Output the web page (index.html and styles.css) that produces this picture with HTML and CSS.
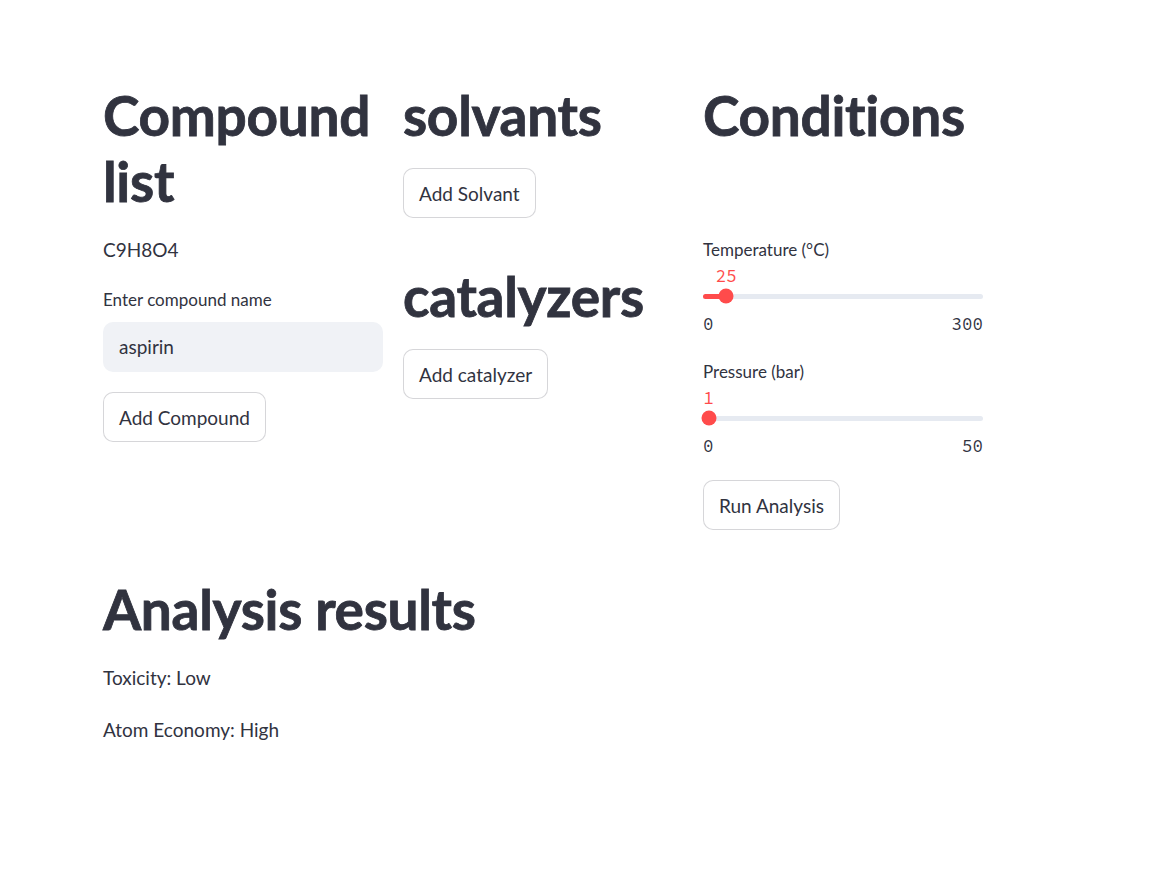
FILE: index.html
```html
<!DOCTYPE html>
<html lang="en">
<head>
<meta charset="utf-8">
<title>Compound analysis</title>
<link rel="stylesheet" href="styles.css">
</head>
<body>
<div class="app">
  <div class="block">
    <div class="cols">
      <div class="col">
        <h1 class="h1 first">Compound list</h1>
        <p class="txt">C9H8O4</p>
        <div class="field">
          <label class="lbl">Enter compound name</label>
          <div class="input">aspirin</div>
        </div>
        <div><button class="btn">Add Compound</button></div>
      </div>
      <div class="col">
        <h1 class="h1 first">solvants</h1>
        <div><button class="btn">Add Solvant</button></div>
        <h1 class="h1">catalyzers</h1>
        <div><button class="btn">Add catalyzer</button></div>
      </div>
      <div class="col">
        <h1 class="h1 first">Conditions</h1>
        <div class="spacer"></div>
        <div class="slider">
          <div class="lbl">Temperature (°C)</div>
          <div class="value-row"><span class="value" style="left: 23.3px">25</span></div>
          <div class="track-row">
            <div class="track"><div class="fill" style="width: 23.3px"></div></div>
            <div class="thumb" style="left: 23.3px"></div>
          </div>
          <div class="ticks"><span>0</span><span>300</span></div>
        </div>
        <div class="slider">
          <div class="lbl">Pressure (bar)</div>
          <div class="value-row"><span class="value" style="left: 5.6px">1</span></div>
          <div class="track-row">
            <div class="track"><div class="fill" style="width: 5.6px"></div></div>
            <div class="thumb" style="left: 5.6px"></div>
          </div>
          <div class="ticks"><span>0</span><span>50</span></div>
        </div>
        <div><button class="btn">Run Analysis</button></div>
      </div>
    </div>
    <h1 class="h1 results">Analysis results</h1>
    <p class="txt">Toxicity: Low</p>
    <p class="txt">Atom Economy: High</p>
  </div>
</div>
</body>
</html>
```

FILE: styles.css
```css
* { box-sizing: border-box; }
html, body { margin: 0; padding: 0; background: #ffffff; }
body {
  font-family: "Source Sans Pro", "Lato", "Liberation Sans", sans-serif;
  color: #31333f;
  font-size: 19px;
}
.app { padding: 82px 0 60px 103px; }
.block { width: 880px; display: flex; flex-direction: column; gap: 20px; }
.cols { display: flex; gap: 20px; align-items: flex-start; }
.col { width: 280px; display: flex; flex-direction: column; gap: 20px; }
.h1 {
  margin: 0;
  padding-top: 25px;
  font-size: 55px;
  line-height: 66px;
  font-weight: 700;
  letter-spacing: -0.3px;
  -webkit-text-stroke: 0.8px #31333f;
}
.h1.first { padding-top: 0; }
.h1.results { padding-top: 26px; }
.txt { margin: 0; line-height: 32px; font-size: 19px; }
.field { display: flex; flex-direction: column; }
.lbl { font-size: 17px; line-height: 28px; }
.field .lbl { margin-bottom: 8px; }
.input {
  height: 50px;
  background: #f0f2f6;
  border-radius: 10px;
  padding-left: 16px;
  line-height: 50px;
  font-size: 19px;
}
.btn {
  font-family: inherit;
  font-size: 19px;
  color: #31333f;
  background: #ffffff;
  border: 1px solid rgba(49, 51, 63, 0.2);
  border-radius: 10px;
  height: 50px;
  padding: 0 15px;
  cursor: pointer;
}
.spacer { height: 48px; }
.slider { display: flex; flex-direction: column; padding-bottom: 4px; }
.value-row { position: relative; height: 20px; margin-top: 2px; }
.value {
  position: absolute;
  top: 0;
  transform: translateX(-50%);
  font-family: "Source Code Pro", "Liberation Mono", monospace;
  font-size: 17.5px;
  line-height: 20px;
  color: #ff4b4b;
}
.track-row { position: relative; height: 20px; display: flex; align-items: center; }
.track { width: 100%; height: 5px; border-radius: 3px; background: #e6eaf1; overflow: hidden; }
.fill { height: 100%; background: #ff4b4b; }
.thumb {
  position: absolute;
  top: 50%;
  width: 15px;
  height: 15px;
  border-radius: 50%;
  background: #ff4b4b;
  transform: translate(-50%, -50%);
}
.ticks {
  margin-top: 8px;
  display: flex;
  justify-content: space-between;
  font-family: "Source Code Pro", "Liberation Mono", monospace;
  font-size: 17.5px;
  line-height: 20px;
}
```
